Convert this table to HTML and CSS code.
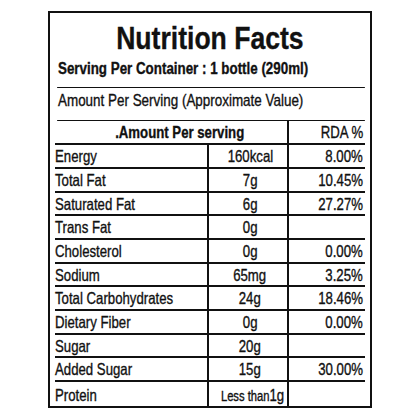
FILE: index.html
```html
<!DOCTYPE html>
<html lang="en">
<head>
    <meta charset="UTF-8">
    <meta name="viewport" content="width=device-width, initial-scale=1.0">
    <title>Nutrition Facts</title>
    <link rel="stylesheet" href="styles.css">
</head>
<body>
    <div class="label">
        <h1 class="title"><span class="t">Nutrition Facts</span></h1>
        <p class="serving"><span class="t">Serving Per Container : 1 bottle (290ml)</span></p>
        <div class="rule"></div>
        <p class="approx"><span class="t">Amount Per Serving (Approximate Value)</span></p>
        <div class="rule"></div>

        <div class="facts">
            <div class="head amount"><span class="t">.Amount Per serving</span></div>
            <div class="head rda"><span class="t">RDA %</span></div>

            <div class="cell name"><span class="t">Energy</span></div>
            <div class="cell qty"><span class="t">160kcal</span></div>
            <div class="cell pct"><span class="t">8.00%</span></div>

            <div class="cell name"><span class="t">Total Fat</span></div>
            <div class="cell qty"><span class="t">7g</span></div>
            <div class="cell pct"><span class="t">10.45%</span></div>

            <div class="cell name"><span class="t">Saturated Fat</span></div>
            <div class="cell qty"><span class="t">6g</span></div>
            <div class="cell pct"><span class="t">27.27%</span></div>

            <div class="cell name"><span class="t">Trans Fat</span></div>
            <div class="cell qty"><span class="t">0g</span></div>
            <div class="cell pct"></div>

            <div class="cell name"><span class="t">Cholesterol</span></div>
            <div class="cell qty"><span class="t">0g</span></div>
            <div class="cell pct"><span class="t">0.00%</span></div>

            <div class="cell name"><span class="t">Sodium</span></div>
            <div class="cell qty"><span class="t">65mg</span></div>
            <div class="cell pct"><span class="t">3.25%</span></div>

            <div class="cell name"><span class="t">Total Carbohydrates</span></div>
            <div class="cell qty"><span class="t">24g</span></div>
            <div class="cell pct"><span class="t">18.46%</span></div>

            <div class="cell name"><span class="t">Dietary Fiber</span></div>
            <div class="cell qty"><span class="t">0g</span></div>
            <div class="cell pct"><span class="t">0.00%</span></div>

            <div class="cell name"><span class="t">Sugar</span></div>
            <div class="cell qty"><span class="t">20g</span></div>
            <div class="cell pct"></div>

            <div class="cell name"><span class="t">Added Sugar</span></div>
            <div class="cell qty"><span class="t">15g</span></div>
            <div class="cell pct"><span class="t">30.00%</span></div>

            <div class="cell name last"><span class="t">Protein</span></div>
            <div class="cell qty last"><span class="t"><span class="small">Less than</span>1g</span></div>
            <div class="cell pct last"></div>
        </div>
    </div>
</body>
</html>
```

FILE: styles.css
```css
:root {
    --ink: #111111;
    --paper: #ffffff;
}

body {
    margin: 0;
    background-color: var(--paper);
    color: var(--ink);
    font-family: 'Liberation Sans', Arial, sans-serif;
}

/* no narrow face installed, so text is squeezed sideways */
.t {
    display: inline-block;
    white-space: nowrap;
    transform: scaleX(0.8);
    transform-origin: left center;
    -webkit-text-stroke: 0.35px var(--ink);
}

.label {
    width: 324px;
    height: 397px;
    margin: 11px 0 0 48px;
    border: 2px solid var(--ink);
    box-sizing: border-box;
    padding: 0 5px;
    display: flex;
    flex-direction: column;
}

.title {
    margin: 5px 0 0;
    font-size: 32px;
    line-height: 40px;
    text-align: center;
    font-weight: bold;
    white-space: nowrap;
}

.title .t {
    transform: scaleX(0.83);
    transform-origin: center;
}

.serving {
    margin: 1px 0 0 3px;
    font-size: 16px;
    line-height: 20px;
    font-weight: bold;
    white-space: nowrap;
}

.serving .t {
    transform: scaleX(0.835);
}

.rule {
    height: 4px;
    margin: 8px 0 0 2px;
    background-color: var(--ink);
    border-radius: 2px;
}

.approx {
    margin: 2px 0 0 3px;
    font-size: 17px;
    line-height: 22px;
    white-space: nowrap;
}

.approx .t {
    transform: scaleX(0.79);
}

.facts {
    flex: 1;
    display: grid;
    grid-template-columns: 152px 80px 78px;
    grid-template-rows: 24px repeat(10, 23.7px) 1fr;
    font-size: 16.5px;
}

.head,
.cell {
    border-bottom: 2px solid var(--ink);
    line-height: 20px;
    padding-top: 1px;
    white-space: nowrap;
}

.amount {
    grid-column: span 2;
    font-weight: bold;
    text-align: center;
    padding-left: 18px;
}

.amount .t,
.qty .t {
    transform-origin: center;
}

.rda {
    border-left: 2px solid var(--ink);
    text-align: right;
    padding-right: 2px;
}

.rda .t,
.pct .t {
    transform-origin: right center;
}

.qty,
.pct {
    border-left: 2px solid var(--ink);
}

.qty {
    text-align: center;
    padding-left: 4px;
}

.pct {
    text-align: right;
    padding-right: 2px;
}

.last {
    border-bottom: none;
    padding-top: 3px;
}

.small {
    font-size: 14px;
}
```
